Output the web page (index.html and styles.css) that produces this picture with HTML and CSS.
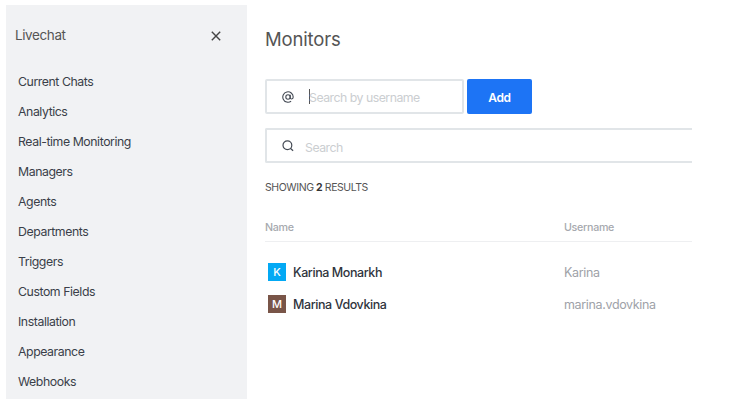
FILE: index.html
```html
<!DOCTYPE html>
<html lang="en">
<head>
<meta charset="utf-8">
<title>Monitors</title>
<link rel="stylesheet" href="styles.css">
</head>
<body>
<div class="app">
  <aside class="sidebar">
    <header class="sidebar-header">
      <h2 class="sidebar-title"><span>Livechat</span></h2>
      <svg class="close" viewBox="0 0 10 10"><path d="M0.8 0.8L9.2 9.2M9.2 0.8L0.8 9.2"/></svg>
    </header>
    <nav class="menu">
      <a class="item"><span>Current Chats</span></a>
      <a class="item"><span>Analytics</span></a>
      <a class="item"><span>Real-time Monitoring</span></a>
      <a class="item"><span>Managers</span></a>
      <a class="item"><span>Agents</span></a>
      <a class="item"><span>Departments</span></a>
      <a class="item"><span>Triggers</span></a>
      <a class="item"><span>Custom Fields</span></a>
      <a class="item"><span>Installation</span></a>
      <a class="item"><span>Appearance</span></a>
      <a class="item"><span>Webhooks</span></a>
    </nav>
  </aside>
  <main class="content">
    <h1 class="title">Monitors</h1>
    <div class="add-row">
      <div class="field username-field">
        <svg class="icon" viewBox="0 0 12 12"><circle cx="6" cy="6" r="2.2"/><path d="M8.2 3.8v2.7c0 2.1 3 2 3-.5a5.2 5.2 0 1 0-2.1 4.2"/></svg>
        <span class="caret"></span>
        <span class="placeholder">Search by username</span>
      </div>
      <button class="add">Add</button>
    </div>
    <div class="field search-field">
      <svg class="icon search-icon" viewBox="0 0 12 12"><circle cx="5.4" cy="5.3" r="4.4"/><path d="M8.6 8.5l2.5 2.3"/></svg>
      <span class="placeholder">Search</span>
    </div>
    <p class="results">SHOWING <b>2</b> RESULTS</p>
    <div class="row head"><span>Name</span><span>Username</span></div>
    <div class="rows">
      <div class="row"><div class="person"><span class="avatar blue">K</span><span class="name">Karina Monarkh</span></div><span class="user">Karina</span></div>
      <div class="row"><div class="person"><span class="avatar brown">M</span><span class="name">Marina Vdovkina</span></div><span class="user">marina.vdovkina</span></div>
    </div>
  </main>
</div>
</body>
</html>
```
FILE: styles.css
```css
* { box-sizing: border-box; }
body {
  margin: 0;
  background: #fff;
  font-family: Inter, "Liberation Sans", sans-serif;
  font-size: 12.5px;
  color: #3a3f49;
}
.app { display: flex; height: 406px; padding: 5px 40px 7px 6px; overflow: hidden; }
.sidebar { width: 241px; flex: none; background: #f1f2f4; }
.sidebar-header {
  display: flex;
  align-items: center;
  justify-content: space-between;
  height: 61px;
  padding: 0 26px 2px 9px;
}
.sidebar-title { margin: 0; font-size: 13.5px; font-weight: 400; letter-spacing: -0.4px; color: #555; }
.close { width: 10px; height: 10px; margin-top: 3px; fill: none; stroke: #444; stroke-width: 1.4; }
.item { display: flex; align-items: center; height: 30px; padding-left: 12px; font-size: 12.3px; letter-spacing: -0.43px; }
.content { flex: 1; min-width: 0; padding-left: 18px; }
.title { margin: 22px 0 0; font-size: 18.5px; line-height: 24px; font-weight: 400; letter-spacing: -0.15px; color: #555; }
.add-row { display: flex; gap: 3px; margin-top: 28px; }
.field {
  display: flex;
  align-items: center;
  height: 35px;
  padding-left: 15px;
  border: 2px solid #e1e5e8;
  border-radius: 2px;
}
.username-field { width: 199px; }
.icon { width: 12px; height: 12px; margin-top: 0; fill: none; stroke: #444a54; stroke-width: 1.1; }
.search-icon { margin-top: 1px; stroke-width: 1.2; }
.caret { width: 1px; height: 15px; margin: 0 0 0 15px; background: #555; }
.placeholder { color: #cbced1; margin: 2px 0 0 -1px; font-size: 12.3px; letter-spacing: -0.5px; }
.add {
  width: 65px;
  height: 35px;
  border: 0;
  border-radius: 2px;
  padding: 2px 0 0;
  background: #1d74f5;
  color: #fff;
  font: 600 12px Inter, sans-serif;
  letter-spacing: -0.3px;
}
.search-field { margin-top: 14px; border-right: 0; border-radius: 2px 0 0 2px; }
.search-field .placeholder { margin: 3px 0 0 11px; }
.results { margin: 17px 0 0; font-size: 10.5px; line-height: 16px; letter-spacing: -0.42px; color: #555; }
.results b { color: #333; }
.row { display: grid; grid-template-columns: 299px 1fr; align-items: center; height: 32px; }
.head {
  height: 29px;
  margin-top: 17px;
  border-bottom: 1px solid #eeeff1;
  font-size: 10.7px;
  font-weight: 500;
  letter-spacing: -0.3px;
  color: #a6a9ae;
}
.rows { padding-top: 14px; }
.person { display: flex; align-items: center; padding-left: 3px; }
.avatar {
  display: flex;
  align-items: center;
  justify-content: center;
  width: 18px;
  height: 18px;
  color: #fff;
  font-size: 11px;
  font-weight: 500;
}
.blue { background: #03a9f4; }
.brown { background: #795548; }
.name { margin: 1px 0 0 7px; font-weight: 500; letter-spacing: -0.42px; color: #2f343d; }
.user { color: #9ea2a8; letter-spacing: -0.35px; }
```
